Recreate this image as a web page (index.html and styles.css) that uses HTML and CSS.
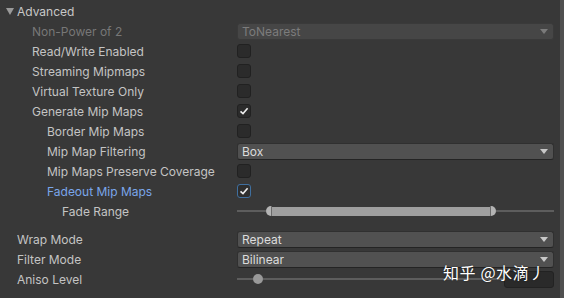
FILE: index.html
```
<!DOCTYPE html>
<html lang="en">
<head>
  <meta charset="UTF-8">
  <title>Texture Import - Advanced</title>
  <link rel="stylesheet" href="styles.css">
</head>
<body>
  <div class="inspector">
    <div class="foldout"><span class="tri"></span>Advanced</div>

    <div class="row l1">
      <span class="label disabled">Non-Power of 2</span>
      <div class="popup off">ToNearest<span class="arrow"></span></div>
    </div>
    <div class="row l1">
      <span class="label">Read/Write Enabled</span>
      <div class="checkbox"></div>
    </div>
    <div class="row l1">
      <span class="label">Streaming Mipmaps</span>
      <div class="checkbox"></div>
    </div>
    <div class="row l1">
      <span class="label">Virtual Texture Only</span>
      <div class="checkbox"></div>
    </div>
    <div class="row l1">
      <span class="label">Generate Mip Maps</span>
      <div class="checkbox">
        <svg viewBox="0 0 12 12"><path d="M2.5 6.3 L5 8.6 L9.6 3.2"/></svg>
      </div>
    </div>
    <div class="row l2">
      <span class="label">Border Mip Maps</span>
      <div class="checkbox"></div>
    </div>
    <div class="row l2">
      <span class="label">Mip Map Filtering</span>
      <div class="popup">Box<span class="arrow"></span></div>
    </div>
    <div class="row l2">
      <span class="label">Mip Maps Preserve Coverage</span>
      <div class="checkbox"></div>
    </div>
    <div class="row l2">
      <span class="label active">Fadeout Mip Maps</span>
      <div class="checkbox focus">
        <svg viewBox="0 0 12 12"><path d="M2.5 6.3 L5 8.6 L9.6 3.2"/></svg>
      </div>
    </div>
    <div class="row l3">
      <span class="label">Fade Range</span>
      <div class="minmax">
        <span class="line lead"></span>
        <span class="cap left"></span>
        <span class="range"></span>
        <span class="cap right"></span>
        <span class="line fill"></span>
      </div>
    </div>

    <div class="gap"></div>

    <div class="row l0">
      <span class="label">Wrap Mode</span>
      <div class="popup">Repeat<span class="arrow"></span></div>
    </div>
    <div class="row l0">
      <span class="label">Filter Mode</span>
      <div class="popup">Bilinear<span class="arrow"></span></div>
    </div>
    <div class="row l0">
      <span class="label">Aniso Level</span>
      <div class="slider">
        <span class="line lead"></span>
        <span class="thumb"></span>
        <span class="line fill"></span>
        <div class="field"></div>
      </div>
    </div>
  </div>
  <div class="scrollbar"></div>

  <div class="watermark">知乎 @水滴丿</div>
</body>
</html>
```
FILE: styles.css
```
body {
  margin: 0;
  height: 298px;
  overflow: hidden;
  display: flex;
  background: #383838;
  font-family: Inter, "Noto Sans", sans-serif;
  font-size: 12px;
  color: #c4c4c4;
}
.inspector {
  flex: 1;
  padding: 1px 6px 0 0;
}
.scrollbar {
  width: 4px;
  background: #505050;
}
.foldout {
  height: 20px;
  display: flex;
  align-items: center;
  padding-left: 6px;
  gap: 3px;
  color: #c8c8c8;
}
.tri {
  width: 0;
  height: 0;
  border-left: 4px solid transparent;
  border-right: 4px solid transparent;
  border-top: 7px solid #9a9a9a;
  margin-top: 1px;
}
.row {
  display: grid;
  grid-template-columns: 237px 1fr;
  height: 20px;
  align-items: center;
}
.l0 .label { padding-left: 17px; }
.l1 .label { padding-left: 32px; }
.l2 .label { padding-left: 47px; }
.l3 .label { padding-left: 62px; }
.label {
  white-space: nowrap;
}
.label.disabled {
  color: #777777;
}
.label.active {
  color: #7aa6ea;
}
.gap {
  height: 8px;
}
.checkbox {
  width: 14px;
  height: 14px;
  box-sizing: border-box;
  background: #2b2b2b;
  border: 1px solid #212121;
  border-radius: 3px;
  display: flex;
  align-items: center;
  justify-content: center;
}
.checkbox.focus {
  border-color: #3f6f9f;
  background: #2e2e2e;
}
.checkbox svg {
  width: 12px;
  height: 12px;
  fill: none;
  stroke: #eeeeee;
  stroke-width: 1.6;
}
.popup {
  height: 17px;
  box-sizing: border-box;
  background: #515151;
  border: 1px solid #303030;
  border-bottom-color: #242424;
  border-radius: 3px;
  padding: 0 4px;
  display: flex;
  align-items: center;
  justify-content: space-between;
  color: #dcdcdc;
}
.popup.off {
  background: #464646;
  border-color: #3a3a3a;
  color: #7c7c7c;
}
.arrow {
  width: 0;
  height: 0;
  border-left: 4px solid transparent;
  border-right: 4px solid transparent;
  border-top: 5px solid #c8c8c8;
  margin-right: 1px;
}
.popup.off .arrow {
  border-top-color: #7a7a7a;
}
.minmax,
.slider {
  display: flex;
  align-items: center;
  height: 20px;
}
.line {
  height: 2px;
  background: #5d5d5d;
}
.minmax .lead {
  width: 29px;
}
.line.fill {
  flex: 1;
}
.range {
  width: 218px;
  height: 9px;
  background: #9f9f9f;
}
.cap {
  width: 5px;
  height: 10px;
  background: #b4b4b4;
}
.cap.left {
  border-radius: 5px 0 0 5px;
  border-right: 1px solid #6a6a6a;
}
.cap.right {
  border-radius: 0 5px 5px 0;
  border-left: 1px solid #6a6a6a;
}
.slider .lead {
  width: 16px;
}
.thumb {
  width: 10px;
  height: 10px;
  border-radius: 50%;
  background: #999999;
}
.field {
  width: 50px;
  height: 17px;
  box-sizing: border-box;
  background: #2a2a2a;
  border: 1px solid #222222;
  border-radius: 3px;
}
.watermark {
  position: absolute;
  left: 443px;
  top: 260px;
  font-family: "Noto Sans CJK SC", sans-serif;
  font-size: 16px;
  letter-spacing: 0.6px;
  color: #ffffff;
  text-shadow: 0 0 2px rgba(0, 0, 0, 0.6);
}
```
